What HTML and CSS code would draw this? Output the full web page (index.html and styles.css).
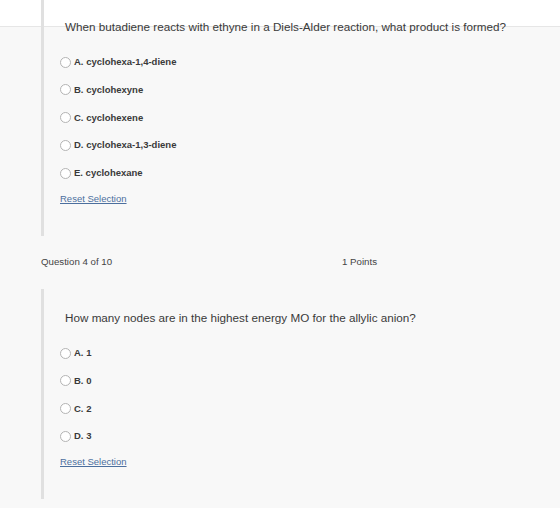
FILE: index.html
```html
<!DOCTYPE html>
<html>
<head>
<meta charset="utf-8">
<link rel="stylesheet" href="styles.css">
</head>
<body>
<div class="question first">
  <p class="qtext">When butadiene reacts with ethyne in a Diels-Alder reaction, what product is formed?</p>
  <div class="options">
    <label class="opt"><span class="radio"></span>A. cyclohexa-1,4-diene</label>
    <label class="opt"><span class="radio"></span>B. cyclohexyne</label>
    <label class="opt"><span class="radio"></span>C. cyclohexene</label>
    <label class="opt"><span class="radio"></span>D. cyclohexa-1,3-diene</label>
    <label class="opt"><span class="radio"></span>E. cyclohexane</label>
    <a class="reset" href="#">Reset Selection</a>
  </div>
</div>
<div class="qhead">
  <span class="qnum">Question 4 of 10</span>
  <span class="points">1 Points</span>
</div>
<div class="question">
  <p class="qtext">How many nodes are in the highest energy MO for the allylic anion?</p>
  <div class="options">
    <label class="opt"><span class="radio"></span>A. 1</label>
    <label class="opt"><span class="radio"></span>B. 0</label>
    <label class="opt"><span class="radio"></span>C. 2</label>
    <label class="opt"><span class="radio"></span>D. 3</label>
    <a class="reset" href="#">Reset Selection</a>
  </div>
</div>
</body>
</html>
```
FILE: styles.css
```css
html, body {
  margin: 0;
  padding: 0;
}
body {
  width: 560px;
  height: 508px;
  overflow: hidden;
  font-family: "Liberation Sans", Arial, Helvetica, sans-serif;
  color: #333;
  background: linear-gradient(#ffffff 0 26px, #e6e6e6 26px 27px, #f8f8f8 27px);
}
.question {
  margin-left: 41px;
  border-left: 3px solid #e0e0e0;
  padding: 22px 0 30.5px 16px;
}
.question.first {
  margin-top: -2px;
}
.qtext {
  margin: 0 0 22px 5px;
  font-size: 11.7px;
  line-height: 14px;
  color: #3a3a3a;
}
.options {
  display: flex;
  flex-direction: column;
  gap: 15.75px;
}
.opt {
  display: flex;
  align-items: center;
  height: 12px;
  font-size: 9.5px;
  font-weight: bold;
  line-height: 12px;
  color: #3a3a3a;
}
.radio {
  width: 9px;
  height: 9px;
  border: 1px solid #b4b4b4;
  border-radius: 50%;
  background: #fff;
  margin-right: 3px;
  flex: none;
}
.reset {
  margin-top: -1.75px;
  align-self: flex-start;
  font-size: 9.5px;
  line-height: 12px;
  color: #4c6f9e;
  text-decoration: underline;
}
.qhead {
  display: flex;
  margin: 20.5px 0 21px 41px;
  font-size: 9.7px;
  line-height: 12px;
  color: #444;
}
.qnum {
  width: 301px;
}
```
